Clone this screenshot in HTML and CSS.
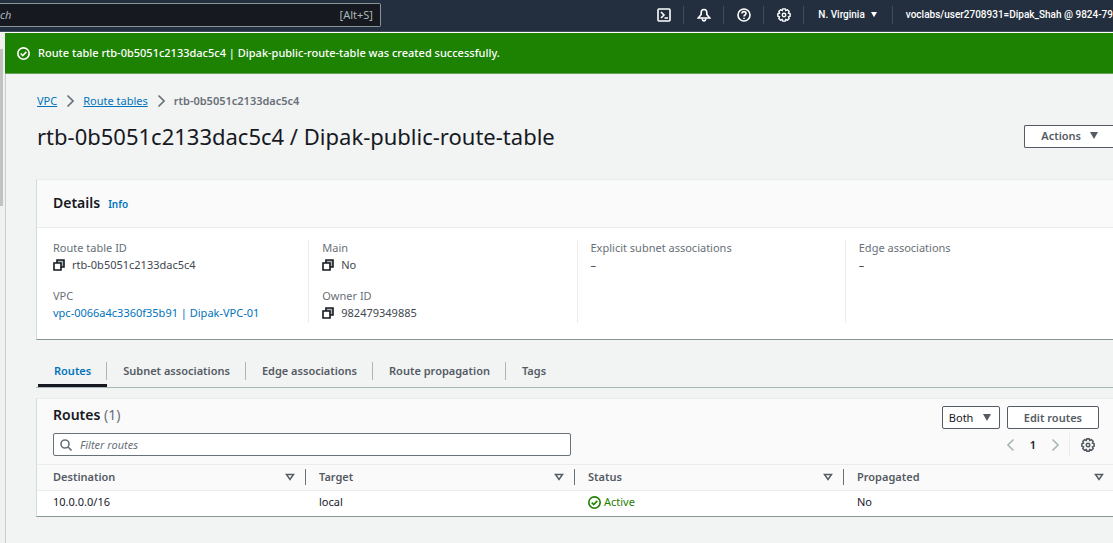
FILE: index.html
```html
<!DOCTYPE html>
<html lang="en">
<head>
<meta charset="utf-8">
<title>Route table details | VPC Console</title>
<link rel="stylesheet" href="styles.css">
</head>
<body>
<svg class="sprite" aria-hidden="true">
  <symbol id="i-check" viewBox="0 0 16 16"><circle cx="8" cy="8" r="7"/><path d="M4.5 8l2.5 2.5 4.5-4.5"/></symbol>
  <symbol id="i-gear" viewBox="0 0 16 16"><path d="M6.600 1h2.800l.6 1.800 1.900-.8 2 2-.8 1.900 1.900.7v2.800l-1.900.7.8 1.900-2 2-1.900-.8-.6 1.800H6.600L6 13.200l-1.900.8-2-2 .8-1.900L1 9.400V6.600l1.900-.7L2.100 4l2-2 1.900.8z"/><circle cx="8" cy="8" r="2"/></symbol>
  <symbol id="i-copy" viewBox="0 0 12 12"><path class="copy-back" d="M4 1h7v7H4z"/><path class="copy-front" d="M1 4h7v7H1z"/></symbol>
  <symbol id="i-down" viewBox="0 0 10 8"><path class="solid" d="M1 0h8L5 7z"/></symbol>
  <symbol id="i-sort" viewBox="0 0 10 8"><path d="M1.500 1.500h7L5 6.500z"/></symbol>
  <symbol id="i-right" viewBox="0 0 8 14"><path d="M1.500 1.500L7 7l-5.500 5.500"/></symbol>
  <symbol id="i-left" viewBox="0 0 8 14"><path d="M6.500 1.500L1 7l5.500 5.500"/></symbol>
</svg>

<header class="topbar">
  <div class="topsearch">
    <input class="topsearch-input" type="search" placeholder="ch" aria-label="Search services">
    <span class="shortcut">[Alt+S]</span>
  </div>
  <nav class="topnav" aria-label="Account">
    <button class="nav-icon" aria-label="CloudShell"><svg class="icon-nav" viewBox="0 0 14 14"><rect x="1" y="1" width="12" height="12" rx="1"/><path d="M4 4l3 3-3 3M7.500 10H11"/></svg></button>
    <button class="nav-icon" aria-label="Notifications"><svg class="icon-nav" viewBox="0 0 14 14"><path d="M1.200 10h11.600L9.800 6.500V4.500C9.800 .4 4.200 .4 4.200 4.500v2z"/><path d="M5.300 10.500c-.2 3.300 3.600 3.300 3.400 0"/></svg></button>
    <button class="nav-icon" aria-label="Help"><svg class="icon-nav" viewBox="0 0 14 14"><circle cx="7" cy="7" r="6"/><path d="M5 5.500C5 3 9 3 9 5.500 9 7 7 7 7 8.500M7 9.800v1.200"/></svg></button>
    <button class="nav-icon" aria-label="Settings"><svg class="icon-nav"><use href="#i-gear"/></svg></button>
    <button class="nav-text">N. Virginia <svg class="caret-small"><use href="#i-down"/></svg></button>
    <button class="nav-text nav-user">voclabs/user2708931=Dipak_Shah @ 9824-79</button>
  </nav>
</header>

<div class="shell">
  <div class="side"><div class="thumb"></div></div>
  <div class="page">
    <div class="flash" role="status"><svg class="icon-flash"><use href="#i-check"/></svg>Route table rtb-0b5051c2133dac5c4 | Dipak-public-route-table was created successfully.</div>
    <main class="content">
      <nav class="crumbs" aria-label="Breadcrumb">
        <a href="#">VPC</a><svg class="chev"><use href="#i-right"/></svg>
        <a href="#">Route tables</a><svg class="chev"><use href="#i-right"/></svg>
        <span class="crumb-now">rtb-0b5051c2133dac5c4</span>
      </nav>
      <div class="title-row">
        <h1 class="title">rtb-0b5051c2133dac5c4 / Dipak-public-route-table</h1>
        <button class="btn btn-actions">Actions <svg class="caret"><use href="#i-down"/></svg></button>
      </div>

      <section class="card">
        <div class="card-head"><h2 class="heading">Details</h2><a class="info" href="#">Info</a></div>
        <div class="details">
          <dl class="col">
            <div><dt>Route table ID</dt><dd><svg class="icon-copy"><use href="#i-copy"/></svg>rtb-0b5051c2133dac5c4</dd></div>
            <div><dt>VPC</dt><dd><a class="link" href="#">vpc-0066a4c3360f35b91 | Dipak-VPC-01</a></dd></div>
          </dl>
          <dl class="col">
            <div><dt>Main</dt><dd><svg class="icon-copy"><use href="#i-copy"/></svg>No</dd></div>
            <div><dt>Owner ID</dt><dd><svg class="icon-copy"><use href="#i-copy"/></svg>982479349885</dd></div>
          </dl>
          <dl class="col"><div><dt>Explicit subnet associations</dt><dd>–</dd></div></dl>
          <dl class="col"><div><dt>Edge associations</dt><dd>–</dd></div></dl>
        </div>
      </section>

      <div class="tabs" role="tablist">
        <button class="tab tab-on" role="tab" aria-selected="true"><span>Routes</span></button>
        <button class="tab" role="tab"><span>Subnet associations</span></button>
        <button class="tab" role="tab"><span>Edge associations</span></button>
        <button class="tab" role="tab"><span>Route propagation</span></button>
        <button class="tab" role="tab"><span>Tags</span></button>
      </div>

      <section class="card routes">
        <div class="tools">
          <div class="tools-row tools-title">
            <h2 class="heading">Routes <span class="count">(1)</span></h2>
            <div class="actions">
              <div class="picker">
                <select class="picker-select" aria-label="Route origin"><option>Both</option></select>
                <svg class="caret"><use href="#i-down"/></svg>
              </div>
              <button class="btn">Edit routes</button>
            </div>
          </div>
          <div class="tools-row tools-filter">
            <label class="filter">
              <svg class="icon-search" viewBox="0 0 12 12"><circle cx="5" cy="5" r="4"/><path d="M8 8l3.500 3.500"/></svg>
              <input class="filter-input" type="text" placeholder="Filter routes" aria-label="Filter routes">
            </label>
            <div class="pager">
              <button class="page-btn" aria-label="Previous page"><svg class="chev"><use href="#i-left"/></svg></button>
              <button class="page-num">1</button>
              <button class="page-btn" aria-label="Next page"><svg class="chev"><use href="#i-right"/></svg></button>
              <button class="prefs" aria-label="Preferences"><svg class="icon-prefs"><use href="#i-gear"/></svg></button>
            </div>
          </div>
        </div>
        <table class="table">
          <thead><tr>
            <th scope="col"><div class="th">Destination<svg class="sort"><use href="#i-sort"/></svg></div></th>
            <th scope="col"><div class="th">Target<svg class="sort"><use href="#i-sort"/></svg></div></th>
            <th scope="col"><div class="th">Status<svg class="sort"><use href="#i-sort"/></svg></div></th>
            <th scope="col"><div class="th">Propagated<svg class="sort"><use href="#i-sort"/></svg></div></th>
          </tr></thead>
          <tbody><tr>
            <td>10.0.0.0/16</td><td>local</td>
            <td><span class="active"><svg class="icon-status"><use href="#i-check"/></svg>Active</span></td>
            <td>No</td>
          </tr></tbody>
        </table>
      </section>
    </main>
  </div>
</div>
</body>
</html>
```
FILE: styles.css
```css
* { box-sizing: border-box; }
body {
  margin: 0;
  min-height: 100vh;
  display: flex;
  flex-direction: column;
  background: #f2f3f3;
  color: #16191f;
  font: 11px/18px "Noto Sans", "Open Sans", sans-serif;
  overflow-x: hidden;
}
h1, h2, dl, dd { margin: 0; }
button, input, select { font: inherit; color: inherit; }
button { background: none; border: 0; padding: 0; white-space: nowrap; }
svg { flex: none; fill: none; stroke: currentColor; stroke-width: 2; }
.sprite { position: absolute; width: 0; height: 0; }
.solid { fill: currentColor; stroke: none; }
.copy-back { fill: #aab7b8; stroke-width: 1.600; }
.copy-front { fill: #fff; stroke-width: 1.600; }
a { color: #0073bb; }

.topbar {
  display: flex;
  justify-content: space-between;
  align-items: center;
  height: 33px;
  padding-bottom: 2px;
  background: #232f3e;
  border-bottom: 1px solid #fff;
  box-shadow: inset 0 -1px #414d5c;
  overflow: hidden;
}
.topsearch {
  display: flex;
  align-items: center;
  flex: 0 1 381px;
  height: 24px;
  padding-right: 7px;
  background: #16191f;
  border: 1px solid #879596;
  border-left: 0;
  border-radius: 0 2px 2px 0;
}
.topsearch-input { flex: 1; min-width: 0; padding: 0; background: none; border: 0; color: #fff; font-style: italic; }
.topsearch-input::placeholder { color: #aab7b8; }
.shortcut { color: #aab7b8; }
.topnav { display: flex; align-items: center; color: #fff; }
.nav-icon, .nav-text { display: flex; align-items: center; justify-content: center; height: 18px; border-right: 1px solid #414d5c; }
.nav-icon { width: 40px; }
.nav-text { padding: 0 14px; gap: 5px; font-family: Roboto, "Noto Sans", sans-serif; font-size: 10px; font-weight: 500; }
.nav-user { border-right: 0; padding: 0 0 0 13px; }
.icon-nav { width: 14px; height: 14px; stroke-width: 1.600; }
.caret-small { width: 8px; height: 6px; }

.shell { display: flex; flex: 1; }
.side { flex: none; width: 5px; padding-top: 16px; background: #f0f0f0; }
.thumb { width: 3px; height: 157px; background: #c1c1c1; }
.page { flex: 1; min-width: 0; }
.flash {
  display: flex;
  align-items: center;
  gap: 8px;
  height: 41px;
  padding-left: 12px;
  background: #1d8102;
  border-bottom: 1px solid #6b9f5c;
  color: #fff;
  font-weight: 500;
}
.icon-flash { width: 13px; height: 13px; }
.content { min-height: calc(100vh - 74px); padding: 18px 0 0 30px; border-left: 1px solid #ccc; }
.crumbs { display: flex; align-items: center; gap: 9px; padding-left: 1px; }
.chev { width: 8px; height: 14px; color: #687078; stroke-width: 1.600; }
.crumb-now { color: #687078; font-weight: 600; }
.title-row { display: flex; justify-content: space-between; align-items: center; margin-top: 11px; padding-left: 1px; }
.title { font-size: 22px; line-height: 30px; font-weight: 400; }
.btn {
  display: flex;
  align-items: center;
  justify-content: center;
  gap: 8px;
  height: 23px;
  padding: 0 16px;
  background: #fff;
  border: 1px solid #545b64;
  border-radius: 2px;
  color: #545b64;
  font-weight: 600;
}
.btn-actions { border-right: 0; border-radius: 2px 0 0 2px; padding: 0 14px 0 16px; }
.caret { width: 10px; height: 8px; color: #545b64; }

.card { margin-top: 28px; background: #fff; border: 1px solid #eaeded; border-left-color: #d5dbdb; border-right: 0; border-bottom-color: #879596; }
.card-head { display: flex; align-items: baseline; gap: 8px; padding: 14px 16px; background: #fafafa; border-bottom: 1px solid #eaeded; }
.heading { font-size: 14px; line-height: 18px; font-weight: 600; }
.info { font-size: 10px; font-weight: 600; text-decoration: none; }
.details { display: grid; grid-template-columns: repeat(4, 1fr); padding: 12px 0 16px 3px; }
.col { display: flex; flex-direction: column; gap: 14px; padding-left: 13px; height: 83px; border-left: 1px solid #eaeded; }
.col:first-child { border-left: 0; }
.col dt { color: #687078; line-height: 16px; }
.col dd { display: flex; align-items: center; gap: 7px; color: #414750; line-height: 18px; }
.icon-copy { width: 12px; height: 12px; color: #16191f; }
.link { text-decoration: none; }

.tabs { display: flex; margin-top: 14px; padding-left: 2px; height: 34px; border-bottom: 1px solid #aab7b8; }
.tab { display: flex; height: 33px; padding-top: 8px; color: #545b64; font-weight: 600; border-bottom: 3px solid transparent; }
.tab span { height: 18px; padding: 0 15px 0 16px; border-right: 1px solid #aab7b8; }
.tab:last-child span { border-right: 0; }
.tab-on { color: #0073bb; border-bottom-color: #16191f; }

.routes { margin-top: 10px; }
.tools { padding: 7px 14px 8px 16px; background: #fafafa; border-bottom: 1px solid #eaeded; }
.tools-row { display: flex; justify-content: space-between; align-items: center; }
.tools-title { align-items: flex-start; }
.tools-filter { margin-top: 4px; }
.count { color: #687078; font-weight: 400; }
.actions { display: flex; gap: 7px; }
.picker { display: flex; align-items: center; height: 23px; width: 58px; padding-right: 7px; background: #fff; border: 1px solid #545b64; border-radius: 2px; }
.picker-select { flex: 1; min-width: 0; height: 21px; padding: 0 0 0 6px; appearance: none; background: none; border: 0; }
.filter { display: flex; align-items: center; flex: 0 1 518px; gap: 8px; height: 23px; padding-left: 6px; background: #fff; border: 1px solid #687078; border-radius: 2px; }
.icon-search { width: 12px; height: 12px; color: #687078; stroke-width: 1.600; }
.filter-input { flex: 1; min-width: 0; border: 0; padding: 0; background: none; outline: 0; }
.filter-input::placeholder { color: #687078; font-style: italic; }
.pager { display: flex; align-items: center; height: 23px; }
.page-btn { display: flex; }
.page-btn .chev { color: #aab7b8; }
.page-num { width: 36px; font-weight: 600; }
.prefs { display: flex; align-items: center; height: 23px; margin-left: 10px; padding: 0 4px 0 11px; border-left: 1px solid #eaeded; color: #545b64; }
.icon-prefs { width: 14px; height: 14px; stroke-width: 1.800; }

.table { width: 100%; table-layout: fixed; border-collapse: collapse; }
.table th { height: 25px; padding: 0; background: #fafafa; border-bottom: 1px solid #eaeded; text-align: left; }
.th { display: flex; align-items: center; justify-content: space-between; height: 16px; padding: 0 10px 0 13px; border-right: 1px solid #687078; color: #545b64; font-weight: 600; }
.table th:first-child .th, .table td:first-child { padding-left: 16px; }
.table th:last-child .th { border-right: 0; padding-right: 9px; }
.sort { width: 10px; height: 8px; stroke-width: 1.500; color: #545b64; }
.table td { height: 26px; padding: 0 0 2px 13px; }
.active { display: flex; align-items: center; gap: 3px; color: #1d8102; }
.icon-status { width: 13px; height: 13px; }
```
